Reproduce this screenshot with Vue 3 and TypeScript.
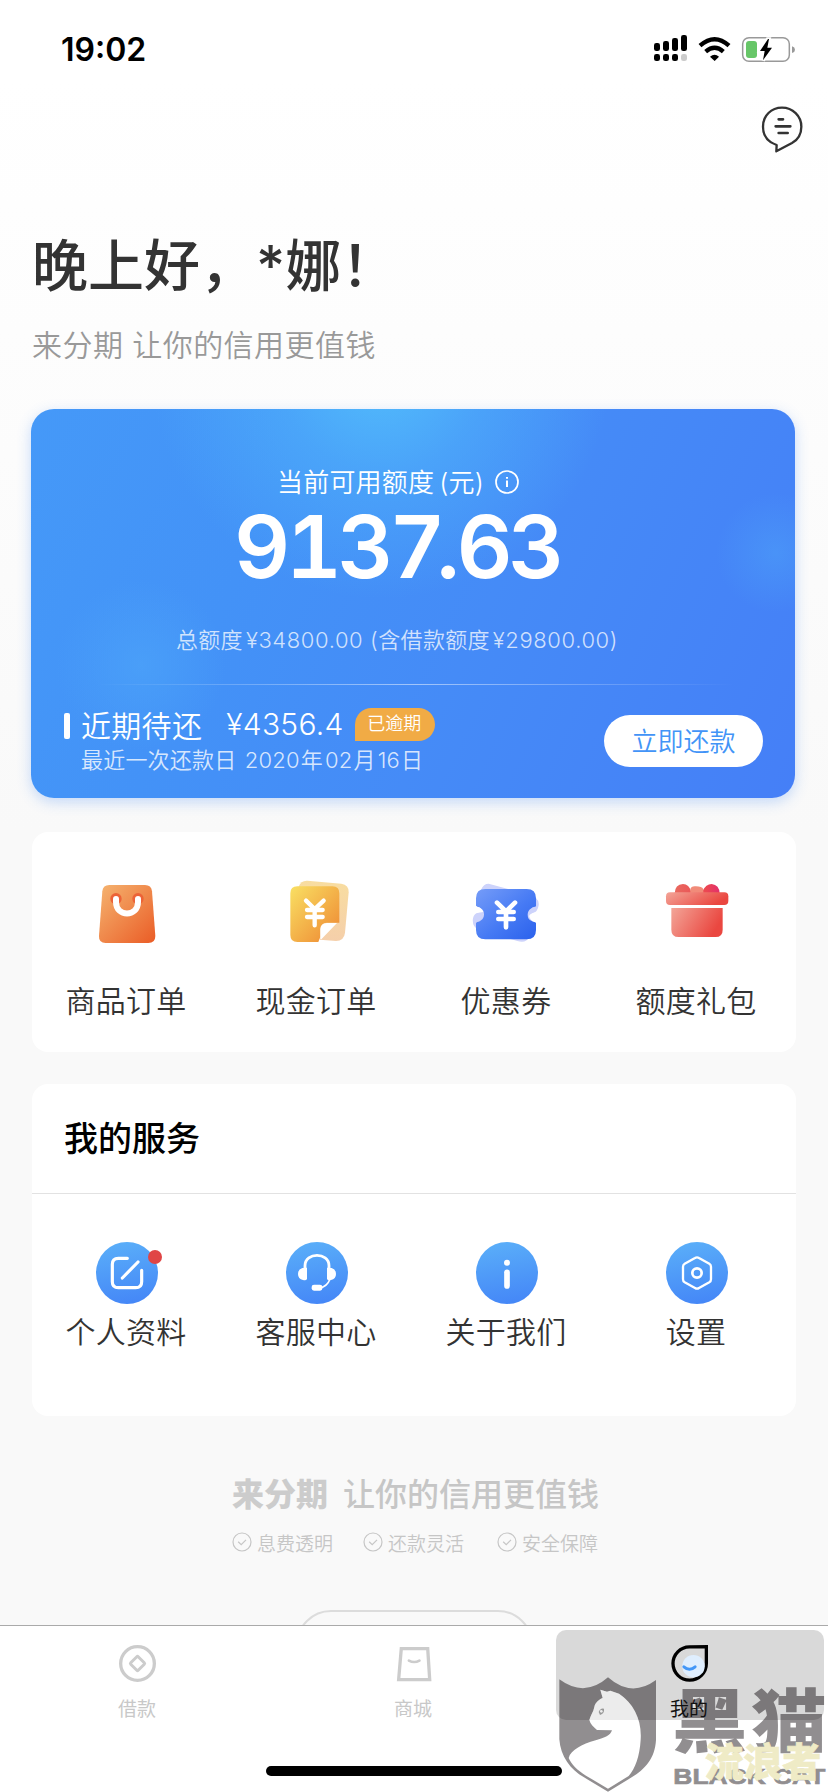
<script setup lang="ts">
interface Entry {
  key: string
  label: string
}

const orders: Entry[] = [
  { key: 'goods', label: '商品订单' },
  { key: 'cash', label: '现金订单' },
  { key: 'coupon', label: '优惠券' },
  { key: 'gift', label: '额度礼包' },
]

const services: Entry[] = [
  { key: 'profile', label: '个人资料' },
  { key: 'support', label: '客服中心' },
  { key: 'about', label: '关于我们' },
  { key: 'settings', label: '设置' },
]

const promises: string[] = ['息费透明', '还款灵活', '安全保障']

const tabs: Entry[] = [
  { key: 'loan', label: '借款' },
  { key: 'mall', label: '商城' },
  { key: 'mine', label: '我的' },
]
const activeTab = 'mine'
</script>

<template>
  <div class="screen">
    <header class="status">
      <span class="time">19:02</span>
      <svg class="status-icons" viewBox="36 36 432 96">
        <g>
          <rect x="39" y="69" width="18" height="24" rx="7" />
          <rect x="66" y="63" width="18" height="30" rx="7" />
          <rect x="93" y="54" width="18" height="39" rx="7" />
          <rect x="120" y="45" width="18" height="48" rx="7" />
          <rect x="39" y="102" width="18" height="21" rx="7" />
          <rect x="66" y="102" width="18" height="21" rx="7" />
          <rect x="93" y="102" width="18" height="21" rx="7" />
          <rect x="120" y="102" width="18" height="21" rx="7" fill="#ccc" />
        </g>
        <g fill="none" stroke="#000" stroke-width="13">
          <path d="M177 77Q221 38 264 77" />
          <path d="M194 95Q221 72 247 95" />
        </g>
        <path d="M207 110Q221 99 234 110L221 123Z" />
        <rect x="305" y="53" width="140" height="71" rx="19" fill="none" stroke="#999" stroke-width="4.5" />
        <path d="M453 79Q462 82 462 89Q462 96 453 99Z" fill="#999" />
        <rect x="315" y="63" width="33" height="51" rx="9" fill="#67c668" />
        <path d="M380 57L357 93H371L366 121L393 83H378L384 57Z" stroke="#fff" stroke-width="11" />
        <path d="M381 57L357 93H371L366 121L393 83H379L384 57Z" />
      </svg>
    </header>

    <div class="toolbar">
      <svg class="message" viewBox="363 259 126 144">
        <path d="M410 376C384 367 369 347 369 321C369 288 394 264 426 264S484 289 484 321C484 345 472 361 456 370L409 395Z" fill="none" stroke="#333" stroke-width="7" stroke-linejoin="round" />
        <path d="M416 299H429M407 320H451M416 340H443" stroke="#333" stroke-width="8" stroke-linecap="round" />
      </svg>
    </div>

    <h1 class="greeting">晚上好，*娜！</h1>
    <p class="slogan">来分期 让你的信用更值钱</p>

    <section class="credit">
      <div class="credit-title">
        <span>当前可用额度</span><span class="unit">(元)</span>
        <svg class="info" viewBox="0 0 24 24">
          <circle cx="12" cy="12" r="11" fill="none" stroke="#fff" stroke-width="1.7" />
          <path d="M12 10.5V17M12 7V8.8" stroke="#fff" stroke-width="2" />
        </svg>
      </div>
      <div class="amount">9137<span class="point">.</span>63</div>
      <div class="total">总额度<i>¥34800.00 (</i>含借款额度<i>¥29800.00)</i></div>
      <div class="rule"></div>
      <div class="repay">
        <div class="mark"></div>
        <div class="due">
          <div class="due-line">
            <span>近期待还</span>
            <span class="due-sum">¥4356.4</span>
            <span class="overdue">已逾期</span>
          </div>
          <div class="due-date">最近一次还款日 <i>2020</i>年<i>02</i>月<i>16</i>日</div>
        </div>
        <button class="pay">立即还款</button>
      </div>
    </section>

    <section class="panel orders">
      <div v-for="item in orders" :key="item.key" class="order">
        <svg v-if="item.key === 'goods'" class="order-icon" viewBox="192 150 198 198">
          <defs>
            <linearGradient id="bag" x1="0" y1="0" x2="1" y2="1"><stop stop-color="#f5b470" /><stop offset="1" stop-color="#ea5c26" /></linearGradient>
          </defs>
          <path d="M238 165H345Q364 165 366 184L376 318Q376 339 355 339H227Q206 339 207 318L217 184Q219 165 238 165Z" fill="url(#bag)" />
          <circle cx="258" cy="206" r="17" fill="#ec6337" /><circle cx="324" cy="206" r="17" fill="#ec6337" />
          <path d="M258 207V216C258 262 324 262 324 216V207" fill="none" stroke="#fff" stroke-width="18" stroke-linecap="round" />
        </svg>
        <svg v-else-if="item.key === 'cash'" class="order-icon" viewBox="762 150 198 198">
          <defs>
            <linearGradient id="note" x1="0" y1="0" x2="1" y2="1"><stop stop-color="#f9e063" /><stop offset="1" stop-color="#ee8631" /></linearGradient>
            <linearGradient id="back" x1="0" y1="0" x2="0" y2="1"><stop stop-color="#f8dda0" /><stop offset="1" stop-color="#f5cfaa" /></linearGradient>
          </defs>
          <path d="M832 152L934 161Q957 164 956 187L945 308Q942 333 918 333L870 329L806 170Q812 151 832 152Z" fill="url(#back)" />
          <path d="M802 169H907Q928 169 928 190V278H890Q872 279 871 297V320L865 336H802Q781 336 781 315V190Q781 169 802 169Z" fill="url(#note)" />
          <path d="M891 279H921L874 328Q870 329 871 320V297Q872 280 891 279Z" fill="#fff" />
          <path d="M828 212L854 237L881 212M854 237V286M831 240H878M831 261H878" fill="none" stroke="#fff" stroke-width="13" stroke-linecap="round" />
        </svg>
        <svg v-else-if="item.key === 'coupon'" class="order-icon" viewBox="162 150 198 198">
          <defs>
            <linearGradient id="ticket" x1="0" y1="0" x2="1" y2="1"><stop stop-color="#759cf8" /><stop offset=".55" stop-color="#467af4" /><stop offset="1" stop-color="#2b61ec" /></linearGradient>
          </defs>
          <path d="M206 161L328 194Q359 202 356 226Q353 247 337 251L350 262L328 321Q318 341 292 333L176 300Q155 290 159 265Q162 250 177 246L170 234L184 178Q190 161 206 161Z" fill="#cdd3fb" />
          <path d="M350 245Q321 252 329 263Q336 276 350 278L368 260Z" fill="#fff" />
          <path d="M196 177H320Q348 177 348 205V229C344 232 340 230 334 235Q323 242 323 254Q323 268 335 273C341 278 345 274 348 279V300Q348 328 320 328H196Q168 328 168 300V279C173 274 178 277 183 271Q192 265 192 253Q192 240 181 234C176 229 172 232 168 227V205Q168 177 196 177Z" fill="url(#ticket)" />
          <path d="M166 228C172 232 176 230 181 234Q188 239 190 246L166 250Z" fill="#fff" />
          <path d="M231 218L258 244L285 218M258 244V292M235 246H281M235 267H281" fill="none" stroke="#fff" stroke-width="14" stroke-linecap="round" />
        </svg>
        <svg v-else class="order-icon" viewBox="732 150 198 198">
          <defs>
            <linearGradient id="gift" x1="0" y1="0" x2="1" y2=".35"><stop stop-color="#f3a598" /><stop offset="1" stop-color="#ea4740" /></linearGradient>
            <linearGradient id="bow" x1="0" y1="0" x2="1" y2="0"><stop stop-color="#e9695f" /><stop offset=".7" stop-color="#ec4751" /><stop offset="1" stop-color="#e22f6d" /></linearGradient>
          </defs>
          <path d="M764 190Q765 163 789 162Q807 163 814 185L847 184Q858 162 875 162Q898 165 899 190Z" fill="url(#bow)" />
          <path d="M811 190V177Q813 170 824 169Q845 168 850 177V190Z" fill="#f18b79" />
          <rect x="738" y="187" width="187" height="38" rx="12" fill="url(#gift)" />
          <path d="M754 234H908V299Q908 321 887 321H776Q754 321 754 299Z" fill="url(#gift)" />
        </svg>
        <span class="caption">{{ item.label }}</span>
      </div>
    </section>

    <section class="panel services">
      <h2 class="panel-title">我的服务</h2>
      <div class="service-grid">
        <div v-for="item in services" :key="item.key" class="service">
          <div class="service-icon">
            <svg v-if="item.key === 'profile'" viewBox="198 486 186 186">
              <path d="M292 535H265Q247 535 247 553V605Q247 623 265 623H317Q335 623 335 605V571M277 594L324 546" fill="none" stroke="#fff" stroke-width="9.5" stroke-linecap="round" />
            </svg>
            <svg v-else-if="item.key === 'support'" viewBox="768 486 186 186">
              <path d="M825 570V557C826 516 896 516 897 557V570" fill="none" stroke="#fff" stroke-width="8.5" />
              <path d="M831 563V597Q828 603 819 600Q804 597 804 582Q804 568 817 564ZM891 563V597Q894 603 903 600Q918 597 918 582Q918 568 905 564Z" fill="#fff" />
              <path d="M900 597Q892 619 870 624" fill="none" stroke="#fff" stroke-width="5" />
              <rect x="845" y="614" width="32" height="18" rx="7" fill="#fff" />
            </svg>
            <svg v-else-if="item.key === 'about'" viewBox="168 186 186 186">
              <circle cx="261" cy="248" r="9" fill="#fff" />
              <path d="M261 277V318" stroke="#fff" stroke-width="17" stroke-linecap="round" />
            </svg>
            <svg v-else viewBox="738 186 186 186">
              <path d="M825 234Q831 230 837 234L868 251Q873 254 873 260V298Q873 304 868 307L837 324Q831 328 825 324L794 307Q789 304 789 298V260Q789 254 794 251Z" fill="none" stroke="#fff" stroke-width="7" />
              <circle cx="831" cy="279" r="14" fill="none" stroke="#fff" stroke-width="8" />
            </svg>
            <span v-if="item.key === 'profile'" class="dot"></span>
          </div>
          <span class="caption">{{ item.label }}</span>
        </div>
      </div>
    </section>

    <footer class="brand">
      <div class="brand-line"><b>来分期</b><span>让你的信用更值钱</span></div>
      <ul class="promises">
        <li v-for="text in promises" :key="text">
          <svg viewBox="0 0 20 20"><circle cx="10" cy="10" r="9" /><path d="M6.2 9.7L9.2 12.6L14 7.8" /></svg>{{ text }}
        </li>
      </ul>
      <div class="outline-clip"><div class="outline-button"></div></div>
    </footer>

    <nav class="tabbar">
      <svg class="watermark" viewBox="0 48 864 498">
        <path d="M58 208Q134 264 204 202Q274 264 348 210V390C345 445 315 478 275 502L204 545L132 502C92 480 61 438 58 388Z" fill="#918e90" />
        <path d="M181 239L201 245L211 242L237 251C282 281 306 330 302 389C299 438 286 475 266 498L204 536L138 497C110 480 94 462 86 444C92 421 125 403 167 391C195 383 211 377 216 361L171 360C161 351 151 343 148 330C151 317 160 307 163 291C166 277 178 268 188 264Z" fill="#fff" />
        <g fill="#918e90" font-weight="900" font-family="'Noto Sans CJK SC', sans-serif">
          <text transform="translate(396 411) scale(1.02 .93)" font-size="222">黑</text>
          <text transform="translate(634 411) scale(1.02 .93)" font-size="222">猫</text>
        </g>
        <text x="400" y="523" font-size="68" font-weight="700" font-family="'Liberation Sans', sans-serif" fill="#918e90" stroke="#918e90" stroke-width="2" textLength="456" lengthAdjust="spacingAndGlyphs">BLACK CAT</text>
        <text x="494" y="499" font-size="117" font-weight="900" font-family="'Noto Sans CJK SC', sans-serif" fill="#efebc6" stroke="#efebc6" stroke-width="2" textLength="350">流浪者</text>
      </svg>
      <div v-for="tab in tabs" :key="tab.key" class="tab" :class="{ active: tab.key === activeTab }">
        <svg v-if="tab.key === 'loan'" class="tab-icon" viewBox="116 104 112 112">
          <circle cx="169" cy="160" r="51" fill="none" stroke="#ccc" stroke-width="10" />
          <rect x="153" y="144" width="32" height="32" rx="3" transform="rotate(45 169 160)" fill="none" stroke="#ccc" stroke-width="9" />
        </svg>
        <svg v-else-if="tab.key === 'mall'" class="tab-icon" viewBox="945 104 112 112">
          <path d="M961 115H1041L1047 209H953Z" fill="none" stroke="#ccc" stroke-width="10" />
          <path d="M984 151Q1000 160 1016 151" fill="none" stroke="#ccc" stroke-width="8" stroke-linecap="round" />
        </svg>
        <svg v-else class="tab-icon" viewBox="391 108 112 112">
          <path d="M495 113V164A50.500 50.500 0 1 1 444 113.500Z" fill="none" stroke="#000" stroke-width="10" />
          <circle cx="456" cy="172" r="34" fill="#dfeefe" />
          <path d="M427 174Q444 189 461 174" fill="none" stroke="#4397f7" stroke-width="9" stroke-linecap="round" />
        </svg>
        <span class="tab-label">{{ tab.label }}</span>
      </div>
      <svg class="watermark" viewBox="0 48 864 498">
        <path d="M181 239L201 245L211 242L237 251C266 270 285 298 295 330H148C151 317 160 307 163 291C166 277 178 268 188 264Z" fill="#fff" fill-opacity=".5" />
        <path d="M176 306Q181 293 192 296Q194 310 180 315Z" fill="#999" />
        <circle cx="184" cy="304" r="4" fill="#eee" />
      </svg>
      <div class="home"></div>
    </nav>
  </div>
</template>

<style>
html,
body {
  margin: 0;
  background: #f9f9f9;
}
</style>

<style scoped>
.screen {
  position: relative;
  box-sizing: border-box;
  width: 828px;
  height: 1792px;
  overflow: hidden;
  display: flex;
  flex-direction: column;
  background: linear-gradient(#fff 0, #fff 80px, #f9f9f9 830px);
  color: #333;
  font-family: Inter, 'Noto Sans CJK SC', sans-serif;
  font-weight: 350;
}
svg {
  display: block;
  overflow: visible;
}
i {
  font-style: normal;
}
.status {
  flex: none;
  height: 100px;
  box-sizing: border-box;
  padding: 32px 31px 0 61px;
  display: flex;
  justify-content: space-between;
  align-items: flex-start;
}
.time {
  font-size: 32px;
  line-height: 36px;
  font-weight: 600;
  color: #000;
}
.status-icons {
  width: 144px;
  height: 32px;
}
.toolbar {
  flex: none;
  height: 120px;
  display: flex;
  justify-content: flex-end;
  padding: 6px 25px 0 0;
  box-sizing: border-box;
}
.message {
  width: 42px;
  height: 48px;
}
.greeting {
  flex: none;
  margin: 0 0 0 32px;
  height: 92px;
  line-height: 92px;
  font-size: 56px;
  font-weight: 500;
  color: #333;
}
.slogan {
  flex: none;
  margin: 13px 0 0 32px;
  height: 40px;
  line-height: 40px;
  font-size: 30px;
  letter-spacing: 0.45px;
  color: #999;
}
.credit {
  flex: none;
  box-sizing: border-box;
  width: 764px;
  height: 389px;
  margin: 44px 0 0 31px;
  padding-top: 53px;
  border-radius: 23px;
  color: #fff;
  background:
    radial-gradient(circle 230px at 350px -40px, rgba(84, 194, 252, 0.9) 0, rgba(80, 180, 251, 0.55) 45%, rgba(74, 160, 250, 0) 100%),
    radial-gradient(circle 60px at 745px 144px, rgba(76, 157, 248, 0.6), rgba(72, 145, 247, 0)),
    radial-gradient(circle 85px at 110px 256px, rgba(76, 163, 249, 0.7), rgba(72, 150, 247, 0)),
    linear-gradient(115deg, #4599f8 0%, #4392f7 30%, #458bf7 58%, #457ff7 100%);
  box-shadow: 0 4px 14px rgba(70, 140, 245, 0.3);
}
.credit-title {
  display: flex;
  align-items: center;
  height: 40px;
  padding-left: 246px;
  font-size: 26px;
  letter-spacing: 0.2px;
}
.credit-title span {
  position: relative;
  top: -2px;
}
.unit {
  margin-left: 5px;
}
.info {
  width: 24px;
  height: 24px;
  margin-left: 11px;
}
.amount {
  height: 84px;
  line-height: 84px;
  margin: 3px 0 0 203px;
  font-size: 87px;
  font-weight: 600;
  font-feature-settings: 'tnum';
  letter-spacing: -4.5px;
}
.point {
  margin: 0 -1px 0 -7px;
  font-feature-settings: 'tnum' 0;
}
.total {
  height: 30px;
  margin: 36px 0 0 145px;
  line-height: 30px;
  font-size: 22px;
  letter-spacing: 0.3px;
  color: rgba(255, 255, 255, 0.75);
  white-space: nowrap;
}
.total i {
  margin-left: 3px;
  letter-spacing: 0.6px;
}
.rule {
  height: 1px;
  margin: 29px 60px 0 65px;
  background: linear-gradient(90deg, rgba(110, 210, 250, 0), rgba(255, 255, 255, 0.5) 50%, rgba(255, 255, 255, 0));
}
.repay {
  display: flex;
  padding: 20px 32px 0 33px;
}
.mark {
  width: 6px;
  height: 26px;
  margin: 8px 11px 0 0;
  border-radius: 2px;
  background: #fff;
}
.due {
  flex: 1;
}
.due-line {
  display: flex;
  align-items: center;
  height: 38px;
  font-size: 30px;
  letter-spacing: 0.3px;
}
.due-sum {
  margin-left: 24px;
  width: 129px;
}
.overdue {
  box-sizing: border-box;
  width: 80px;
  height: 33px;
  padding-left: 12px;
  border-radius: 17px 17px 17px 0;
  background: #f1ab45;
  font-size: 18px;
  line-height: 32px;
  letter-spacing: 0;
}
.due-date {
  height: 34px;
  line-height: 34px;
  font-size: 22px;
  letter-spacing: 0.2px;
  color: rgba(255, 255, 255, 0.8);
}
.due-date i {
  margin: 0 1px 0 2px;
}
.pay {
  width: 159px;
  height: 52px;
  margin: 10px 0 0;
  padding: 0 0 3px;
  border: 0;
  border-radius: 26px;
  background: #fff;
  color: #4294f7;
  font: inherit;
  font-size: 26px;
}
.panel {
  flex: none;
  box-sizing: border-box;
  width: 764px;
  margin-left: 32px;
  border-radius: 16px;
  background: #fff;
}
.orders {
  height: 220px;
  margin-top: 34px;
  padding: 48px 0 0;
  display: grid;
  grid-template-columns: repeat(4, 190px);
}
.order,
.service {
  display: flex;
  flex-direction: column;
  align-items: center;
}
.order-icon {
  width: 66px;
  height: 66px;
}
.caption {
  line-height: 40px;
  font-size: 30px;
  letter-spacing: 0.3px;
  margin-right: 2px;
}
.order .caption {
  margin-top: 35px;
}
.services {
  height: 332px;
  margin-top: 32px;
}
.panel-title {
  box-sizing: border-box;
  height: 110px;
  margin: 0;
  padding-left: 32px;
  border-bottom: 1px solid #e2e2e2;
  line-height: 109px;
  font-size: 34px;
  font-weight: 500;
  color: #000;
}
.service-grid {
  display: grid;
  grid-template-columns: repeat(4, 190px);
  padding-top: 48px;
}
.service-icon {
  position: relative;
  width: 62px;
  height: 62px;
  border-radius: 50%;
  background: linear-gradient(170deg, #5bb0f9, #4384f7);
}
.service-icon svg {
  width: 62px;
  height: 62px;
}
.dot {
  position: absolute;
  left: 52px;
  top: 8px;
  width: 14px;
  height: 14px;
  border-radius: 50%;
  background: #e04545;
}
.service .caption {
  margin-top: 8px;
}
.brand {
  flex: none;
  height: 209px;
  box-sizing: border-box;
  padding-top: 56px;
  color: #c6c6c6;
}
.brand-line {
  display: flex;
  align-items: center;
  height: 40px;
  padding-left: 232px;
  font-size: 32px;
  font-weight: 500;
}
.brand-line b {
  width: 111px;
  font-weight: 900;
  color: #ccc;
}
.promises {
  display: flex;
  gap: 30px;
  height: 30px;
  margin: 15px 0 0;
  padding: 0 0 0 232px;
  list-style: none;
  font-size: 19px;
}
.promises li {
  display: flex;
  align-items: center;
  width: 101px;
  white-space: nowrap;
}
.promises li:last-child {
  margin-left: 3px;
}
.promises svg {
  flex: none;
  width: 20px;
  height: 20px;
  margin-right: 5px;
  fill: none;
  stroke: #c6c6c6;
  stroke-width: 1.2;
}
.outline-clip {
  height: 15px;
  margin-top: 53px;
  overflow: hidden;
}
.outline-button {
  box-sizing: border-box;
  width: 237px;
  height: 70px;
  margin-left: 296px;
  border: 2px solid #dcdcdc;
  border-radius: 35px;
}
.tabbar {
  position: relative;
  flex: none;
  box-sizing: border-box;
  height: 167px;
  border-top: 1px solid #aaa;
  background: #fff;
  display: flex;
}
.watermark {
  position: absolute;
  left: 540px;
  top: 0;
  width: 288px;
  height: 166px;
}
.tab {
  position: relative;
  width: 268px;
  height: 90px;
  margin: 4px 4px 0;
  padding-top: 15px;
  box-sizing: border-box;
  display: flex;
  flex-direction: column;
  align-items: center;
  border-radius: 10px;
  color: #c8c8c8;
}
.tab.active {
  background: rgba(0, 0, 0, 0.15);
  color: #111;
}
.tab-icon {
  width: 37px;
  height: 37px;
}
.tab-label {
  margin: 14px 2px 0 0;
  line-height: 28px;
  font-size: 19px;
  font-weight: 400;
}
.home {
  position: absolute;
  left: 266px;
  top: 140px;
  width: 296px;
  height: 10px;
  border-radius: 5px;
  background: #000;
}
</style>
